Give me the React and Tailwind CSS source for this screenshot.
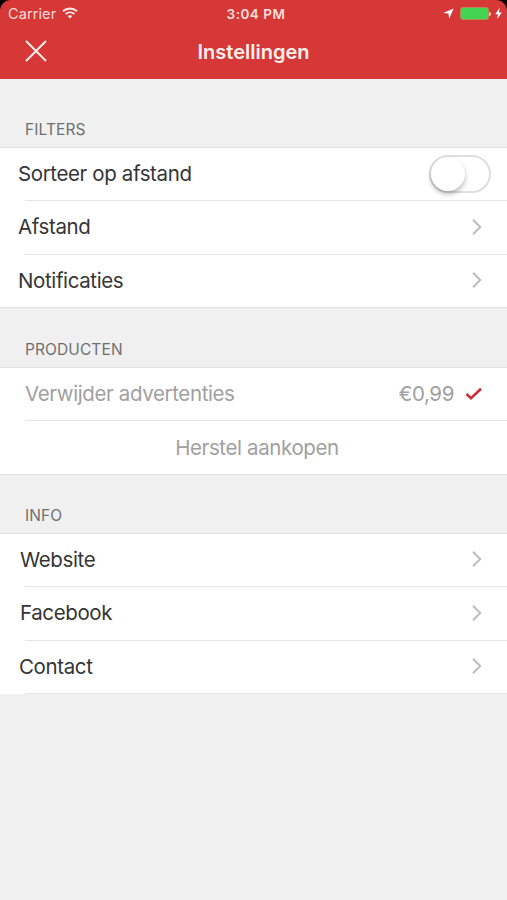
import React, { useState } from 'react';

const Chevron = () => (
  <svg width="12" height="18" viewBox="0 0 12 18" fill="none" className="mt-[-2px] shrink-0">
    <path d="M2 1.8L9.2 9L2 16.2" stroke="#bdbdbd" strokeWidth="2" />
  </svg>
);

const StatusBar = () => (
  <div className="grid h-[27px] grid-cols-3 items-center text-white">
    <div className="flex items-center pl-[8px]">
      <span className="text-[14.5px] tracking-[0.1px] text-[#ffdcd8]">Carrier</span>
      <svg width="16" height="12" viewBox="0 0 16 12" fill="none" className="mt-[-2px] ml-[6px]">
        <path d="M1 4.3C5 0.6 11 0.6 15 4.3" stroke="#ffe9e6" strokeWidth="1.9" />
        <path d="M3.6 7C6.2 4.7 9.8 4.7 12.4 7" stroke="#ffe9e6" strokeWidth="1.8" />
        <path d="M5.6 9.1C7 7.9 9 7.9 10.4 9.1L8 11.6Z" fill="#ffe9e6" />
      </svg>
    </div>
    <span className="pt-px pl-[5px] text-center text-[13.5px] font-semibold tracking-[0.5px] text-[#ffe0dc]">3:04 PM</span>
    <div className="flex items-center justify-end pr-[5px]">
      <svg width="11" height="11" viewBox="0 0 11 11" className="mr-[6px]">
        <path d="M10.6 0.4L0.2 4.9L5.4 5.6L6.2 10.8Z" fill="#fff" />
      </svg>
      <div className="h-[13px] w-[29px] rounded-[3px] border border-[#b58b55] bg-[#43d551]" />
      <div className="mr-[4px] h-[4px] w-[2px] rounded-r-full bg-[#ffc4bd]" />
      <svg width="7" height="11" viewBox="0 0 7 11">
        <path d="M4.6 0L0.2 6.2H3L2.2 11L6.8 4.5H4Z" fill="#fff" />
      </svg>
    </div>
  </div>
);

const Header = () => (
  <div className="bg-black">
    <header className="h-[79px] rounded-t-[11px] bg-[#d63737]">
      <StatusBar />
      <div className="grid h-[50px] grid-cols-3 items-center">
        <button className="ml-[25px] mt-[-2px] w-[22px]" aria-label="Sluiten">
          <svg width="22" height="22" viewBox="0 0 22 22" fill="none">
            <path d="M1 1L21 21M21 1L1 21" stroke="#ffeeeb" strokeWidth="2" />
          </svg>
        </button>
        <h1 className="text-center text-[20px] font-semibold text-[#fff0ee]">Instellingen</h1>
      </div>
    </header>
  </div>
);

const Toggle = ({ on, onChange }) => (
  <button
    role="switch"
    aria-checked={on}
    onClick={() => onChange(!on)}
    className={`mr-[-8px] flex h-[38px] w-[62px] items-center rounded-full border-2 border-[#dedede] bg-white ${on ? 'justify-end' : 'justify-start'}`}
  >
    <span className="h-[34px] w-[34px] rounded-full bg-white shadow-[0_3px_5px_rgba(0,0,0,0.28)]" />
  </button>
);

const SectionTitle = ({ className, children }) => (
  <h2 className={`flex items-end pb-[7px] pl-[25px] text-[15.5px] leading-[20px] tracking-[0.1px] text-[#6f6f6f] ${className}`}>{children}</h2>
);

const Row = ({ label, className = 'pl-[18px] text-[#353535]', height = 'h-[53px]', last, children }) => (
  <li className="bg-white">
    <div className={`flex items-center justify-between pr-[24px] text-[20.5px] tracking-[-0.38px] ${height} ${className}`}>
      <span>{label}</span>
      {children}
    </div>
    {!last && <div className="ml-[25px] h-px bg-[#e6e6e6]" />}
  </li>
);

const App = () => {
  const [sortByDistance, setSortByDistance] = useState(false);

  return (
    <div className="min-h-screen bg-[#f0f0f0] font-['Inter',sans-serif]">
      <Header />

      <SectionTitle className="h-[68px]">FILTERS</SectionTitle>
      <ul className="border-y border-[#e2e2e2]">
        <Row label="Sorteer op afstand" height="h-[52px]">
          <Toggle on={sortByDistance} onChange={setSortByDistance} />
        </Row>
        <Row label="Afstand"><Chevron /></Row>
        <Row label="Notificaties" height="h-[52px]" last><Chevron /></Row>
      </ul>

      <SectionTitle className="h-[59px]">PRODUCTEN</SectionTitle>
      <ul className="border-y border-[#e2e2e2]">
        <Row label="Verwijder advertenties" height="h-[52px]" className="pl-[25px] text-[#a0a0a0]">
          <span className="flex items-center">
            €0,99
            <svg width="18" height="14" viewBox="0 0 18 14" fill="none" className="mt-[-1px] ml-[11px]">
              <path d="M1.5 7L6 11.3L16 1.8" stroke="#d12f35" strokeWidth="2.6" />
            </svg>
          </span>
        </Row>
        <li className="flex h-[53px] items-center justify-center bg-white pt-px pl-[7px] text-[20.5px] tracking-[-0.38px] text-[#a0a0a0]">
          Herstel aankopen
        </li>
      </ul>

      <SectionTitle className="h-[58px]">INFO</SectionTitle>
      <ul className="border-t border-[#e2e2e2]">
        <Row label="Website" height="h-[52px]" className="pl-[20px] text-[#353535]"><Chevron /></Row>
        <Row label="Facebook" className="pl-[20px] text-[#353535]"><Chevron /></Row>
        <Row label="Contact" height="h-[52px]" className="pl-[19px] text-[#353535]"><Chevron /></Row>
      </ul>
    </div>
  );
};

export default App;
